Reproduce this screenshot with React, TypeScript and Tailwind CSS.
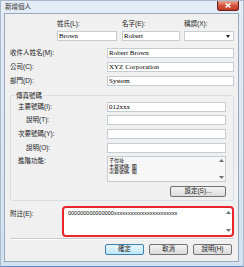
import React from "react";

const FONT = "font-['Liberation_Sans','Noto_Sans_CJK_TC',sans-serif]";
const SERIF = "font-['Liberation_Serif','Noto_Sans_CJK_TC',serif]";

function UpArrow() {
  return (
    <svg width="5" height="3" viewBox="0 0 5 3">
      <path d="M0 3 L2.5 0 L5 3 Z" fill="#6f6f6f" />
    </svg>
  );
}
function DownArrow() {
  return (
    <svg width="5" height="3" viewBox="0 0 5 3">
      <path d="M0 0 L2.5 3 L5 0 Z" fill="#6f6f6f" />
    </svg>
  );
}

function Field({ text, className }: { text?: string; className: string }) {
  return (
    <div
      className={`h-[10px] bg-white border border-[#c5ccd4] flex items-center pl-[1px] text-[7px] leading-none text-black overflow-hidden whitespace-nowrap ${SERIF} ${className}`}
    >
      {text}
    </div>
  );
}

function Btn({ label, primary }: { label: string; primary?: boolean }) {
  return (
    <div
      className={
        primary
          ? "w-[39px] h-[11px] rounded-[2px] border border-[#3c7fb1] bg-gradient-to-b from-[#eaf6fd] to-[#bee6fd] flex items-center justify-center text-[6.5px] leading-none"
          : "w-[39px] h-[11px] rounded-[2px] border border-[#707070] bg-gradient-to-b from-[#f2f2f2] to-[#dcdcdc] flex items-center justify-center text-[6.5px] leading-none"
      }
    >
      {label}
    </div>
  );
}

export default function App() {
  return (
    <div
      className={`w-[244px] h-[267px] relative bg-gradient-to-b from-[#e4ecf5] to-[#d3e1f0] border border-[#a9bacd] border-b-[#5b8fc4] overflow-hidden ${FONT} text-[#222]`}
    >
      {/* title bar */}
      <div className="h-[12px] flex items-center pl-[4px] text-[6.5px] leading-none text-[#333]">
        新增個人
      </div>
      {/* close button */}
      <div className="absolute top-0 right-[4px] w-[22px] h-[10px] rounded-b-[3px] border border-t-0 border-[#6b1b1b] bg-gradient-to-b from-[#e8a493] via-[#d2553e] to-[#c23a24] flex items-center justify-center">
        <svg width="6" height="5" viewBox="0 0 6 5">
          <path d="M0.6 0.4 L5.4 4.6 M5.4 0.4 L0.6 4.6" stroke="#ffffff" strokeWidth="1.3" />
        </svg>
      </div>

      {/* body */}
      <div className="ml-[3px] w-[235px] h-[249px] bg-[#f0f0f0] border border-[#98a9bd] flex flex-col pl-[5px] pr-[4px] text-[6.5px] leading-none">
        {/* labels row */}
        <div className="mt-[6px] h-[8px] flex items-center">
          <div className="w-[47px]" />
          <div className="w-[65px]">姓氏(L):</div>
          <div className="w-[62px]">名字(E):</div>
          <div>稱謂(X):</div>
        </div>
        {/* names inputs */}
        <div className="mt-[3px] flex">
          <div className="w-[47px]" />
          <Field text="Brown" className="w-[60px] mr-[5px]" />
          <Field text="Robert" className="w-[58px] mr-[4px]" />
          <div className="w-[50px] h-[10px] bg-white border border-[#c5ccd4] flex items-center justify-end pr-[3px]">
            <svg width="4" height="3" viewBox="0 0 4 3">
              <path d="M0 0 L4 0 L2 3 Z" fill="#222" />
            </svg>
          </div>
        </div>

        <div className="mt-[7px] flex items-center">
          <div className="w-[97px]">收件人姓名(M):</div>
          <Field text="Robert  Brown" className="flex-1" />
        </div>
        <div className="mt-[4px] flex items-center">
          <div className="w-[97px]">公司(C):</div>
          <Field text="XYZ Corporation" className="flex-1" />
        </div>
        <div className="mt-[4px] flex items-center">
          <div className="w-[97px]">部門(D):</div>
          <Field text="System" className="flex-1" />
        </div>

        {/* group box */}
        <div className="mt-[9px] relative border border-[#d5dfe5] rounded-[2px] pt-[6px] pl-[7px] pr-[7px] pb-[3px] flex flex-col">
          <div className="absolute -top-[4px] left-[4px] bg-[#f0f0f0] px-[1px] h-[8px] flex items-center">傳真號碼</div>
          <div className="flex items-center">
            <div className="w-[89px]">主要號碼(I):</div>
            <Field text="012xxx" className="flex-1" />
          </div>
          <div className="mt-[3px] flex items-center">
            <div className="w-[89px] pl-[8px]">說明(T):</div>
            <Field className="flex-1" />
          </div>
          <div className="mt-[4px] flex items-center">
            <div className="w-[89px]">次要號碼(Y):</div>
            <Field className="flex-1" />
          </div>
          <div className="mt-[4px] flex items-center">
            <div className="w-[89px] pl-[8px]">說明(O):</div>
            <Field className="flex-1" />
          </div>
          <div className="mt-[3px] flex items-start">
            <div className="w-[89px] pt-[2px]">進階功能:</div>
            <div className="flex-1 h-[26px] bg-[#f7f7f7] border border-[#c5ccd4] flex">
              <div className="flex-1 pl-[1px] pt-[1px] text-[5px] leading-[5.5px] text-black flex flex-col">
                <span>子位址</span>
                <span>主要號碼: 關</span>
                <span>次要號碼: 關</span>
              </div>
              <div className="w-[7px] flex flex-col items-center justify-between py-[2px]">
                <UpArrow />
                <DownArrow />
              </div>
            </div>
          </div>
          <div className="mt-[4px] flex justify-end">
            <div className="w-[56px] h-[11px] rounded-[2px] border border-[#707070] bg-gradient-to-b from-[#f2f2f2] to-[#dcdcdc] flex items-center justify-center text-[6.5px] leading-none">
              設定(S)...
            </div>
          </div>
        </div>

        {/* notes */}
        <div className="mt-[5px] flex items-start">
          <div className="w-[52px] pt-[5px]">附註(E):</div>
          <div className="flex-1 h-[31px] rounded-[4px] border-2 border-[#e8262c] bg-white flex">
            <div className="flex-1 pl-[4px] pt-[3px] text-[5.5px] leading-none text-black whitespace-nowrap overflow-hidden">
              000000000000000xxxxxxxxxxxxxxxxxxxxxxx
            </div>
            <div className="w-[8px] flex flex-col items-center justify-between py-[3px]">
              <UpArrow />
              <DownArrow />
            </div>
          </div>
        </div>

        {/* separator */}
        <div className="mt-[1px] h-[2px] border-t border-[#c8c8c8] border-b border-b-white" />

        {/* buttons */}
        <div className="mt-[4px] flex justify-end gap-[5px] pr-[2px]">
          <Btn label="確定" primary />
          <Btn label="取消" />
          <Btn label="說明(H)" />
        </div>
      </div>
    </div>
  );
}
